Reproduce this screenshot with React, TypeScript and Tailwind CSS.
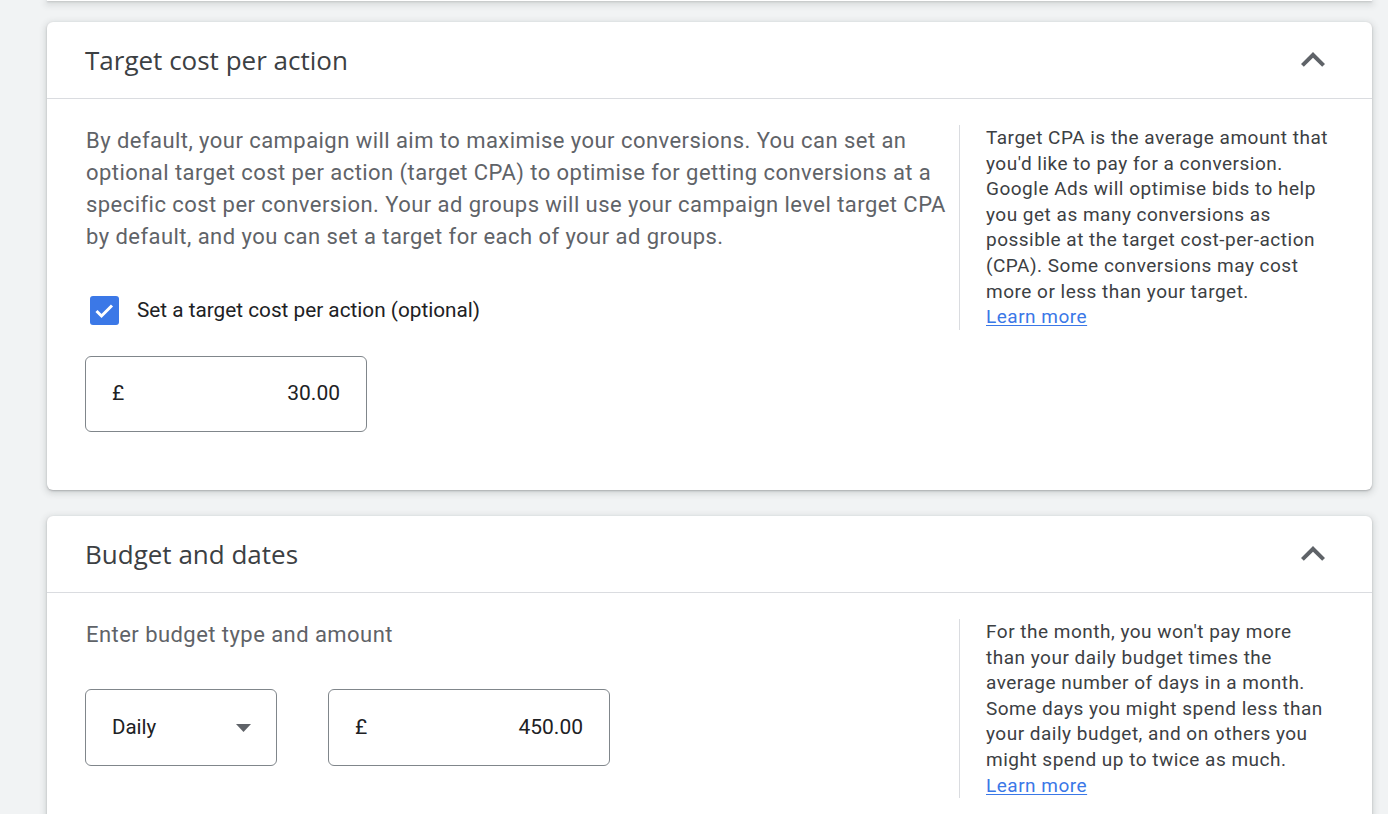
import React from "react";

const Chevron = () => (
  <svg width="48" height="48" viewBox="0 0 24 24" className="shrink-0">
    <path d="M12 8l-6 6 1.41 1.41L12 10.83l4.59 4.58L18 14z" fill="#5f6368" />
  </svg>
);

const Lines = ({ lines }: { lines: string[] }) => (
  <>
    {lines.map((l, i) => (
      <span key={i} className="block whitespace-nowrap">
        {l}
      </span>
    ))}
  </>
);

const Card = ({ title, children }: { title: string; children: React.ReactNode }) => (
  <div className="bg-white rounded-[6px] shadow-[0_1px_2px_rgba(60,64,67,0.3),0_2px_6px_2px_rgba(60,64,67,0.15)]">
    <div className="h-[77px] flex items-center justify-between pl-[38px] pr-[35px] border-b border-[#dadce0]">
      <div className="text-[26px] leading-[32px] text-[#3c4043] font-['Open_Sans',sans-serif] tracking-[0px]">{title}</div>
      <Chevron />
    </div>
    {children}
  </div>
);

const Side = ({ lines }: { lines: string[] }) => (
  <div className="border-l border-[#dadce0] pl-[26px] text-[19px] leading-[25.6px] text-[#3c4043] tracking-[0.5px] self-start">
    <Lines lines={lines} />
    <a className="text-[#3b78e7] underline underline-offset-2 block w-fit">Learn more</a>
  </div>
);

export default function App() {
  return (
    <div className="min-h-[814px] bg-[#f1f3f4] pl-[47px] pr-[16px] font-['Roboto',sans-serif] overflow-hidden">
      <div className="h-px bg-white shadow-[0_1px_2px_rgba(60,64,67,0.3),0_2px_6px_2px_rgba(60,64,67,0.15)] mb-[21px]" />
      <Card title="Target cost per action">
        <div className="grid grid-cols-[1fr_413px] pl-[39px] pt-[26px] pb-[58px]">
          <div>
            <div className="text-[22px] leading-[32px] text-[#5f6368] tracking-[0.45px]">
              <Lines
                lines={[
                  "By default, your campaign will aim to maximise your conversions. You can set an",
                  "optional target cost per action (target CPA) to optimise for getting conversions at a",
                  "specific cost per conversion. Your ad groups will use your campaign level target CPA",
                  "by default, and you can set a target for each of your ad groups.",
                ]}
              />
            </div>
            <div className="flex items-center h-[29px] mt-[43px] ml-[4px]">
              <div className="w-[29px] h-[29px] rounded-[3px] bg-[#3b78e7]">
                <svg width="29" height="29" viewBox="0 0 29 29">
                  <path d="M6.5 15 L11.5 20 L22 9.5" stroke="white" strokeWidth="3" fill="none" />
                </svg>
              </div>
              <span className="ml-[18px] text-[20.75px] leading-[29px] text-[#202124]">Set a target cost per action (optional)</span>
            </div>
            <div className="mt-[31px] -ml-px">
              <div className="w-[282px] h-[76px] border border-[#80868b] rounded-[6px] flex items-center justify-between pl-[26px] pr-[26px] text-[21px] text-[#202124]">
                <span>£</span>
                <span>30.00</span>
              </div>
            </div>
          </div>
          <Side
            lines={[
              "Target CPA is the average amount that",
              "you'd like to pay for a conversion.",
              "Google Ads will optimise bids to help",
              "you get as many conversions as",
              "possible at the target cost-per-action",
              "(CPA). Some conversions may cost",
              "more or less than your target.",
            ]}
          />
        </div>
      </Card>
      <div className="h-[26px]" />
      <Card title="Budget and dates">
        <div className="grid grid-cols-[1fr_413px] pl-[39px] pt-[26px] pb-[40px]">
          <div>
            <div className="text-[22px] leading-[32px] text-[#5f6368] tracking-[0.45px]">Enter budget type and amount</div>
            <div className="flex mt-[38px] gap-[51px] -ml-px">
              <div className="w-[192px] h-[77px] border border-[#80868b] rounded-[6px] flex items-center justify-between pl-[26px] pr-[25px] text-[20.5px] text-[#202124]">
                <span>Daily</span>
                <svg width="15" height="8" viewBox="0 0 15 8">
                  <path d="M0 0h15L7.5 8z" fill="#5f6368" />
                </svg>
              </div>
              <div className="w-[282px] h-[77px] border border-[#80868b] rounded-[6px] flex items-center justify-between pl-[26px] pr-[26px] text-[21px] text-[#202124]">
                <span>£</span>
                <span>450.00</span>
              </div>
            </div>
          </div>
          <Side
            lines={[
              "For the month, you won't pay more",
              "than your daily budget times the",
              "average number of days in a month.",
              "Some days you might spend less than",
              "your daily budget, and on others you",
              "might spend up to twice as much.",
            ]}
          />
        </div>
      </Card>
    </div>
  );
}
